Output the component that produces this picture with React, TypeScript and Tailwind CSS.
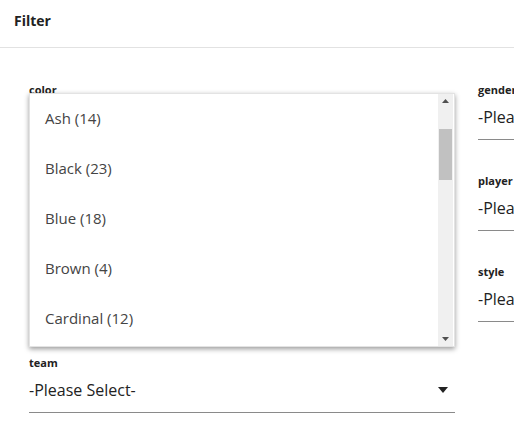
import { ReactNode } from "react";

const font = { fontFamily: '"Open Sans", "Noto Sans", sans-serif' };

function Caret() {
  return (
    <svg width="10" height="6" viewBox="0 0 10 6" className="shrink-0">
      <path d="M0 0h10L5 6z" fill="#222" />
    </svg>
  );
}

function Field({ label, children }: { label: string; children?: ReactNode }) {
  return (
    <div className="h-[91px] flex flex-col">
      <div className="text-[11px] font-bold text-[#222] leading-[14px]">{label}</div>
      <div className="mt-[9px] pb-[11px] flex items-center justify-between border-b border-[#8a8a8a] text-[16px] leading-[22px] text-[#222]">
        <span>-Please Select-</span>
        <span className="mr-[7px]">
          <Caret />
        </span>
      </div>
      {children}
    </div>
  );
}

const colors = ["Ash (14)", "Black (23)", "Blue (18)", "Brown (4)", "Cardinal (12)"];

function ColorList() {
  return (
    <div className="absolute left-0 top-[10px] w-[426px] h-[254px] bg-white border border-[#e3e3e3] shadow-[0_2px_5px_rgba(0,0,0,0.4)] flex">
      <div className="flex-1 flex flex-col -mt-[1px]">
        {colors.map((c) => (
          <div key={c} className="h-[50px] flex items-center pl-[15px] text-[15px] text-[#444]">
            {c}
          </div>
        ))}
      </div>
      <div className="w-[15px] bg-[#f0f0f0] flex flex-col items-center justify-between py-[5px] mr-[1px]">
        <svg width="7" height="4" viewBox="0 0 7 4">
          <path d="M0 4L3.5 0 7 4z" fill="#505050" />
        </svg>
        <div className="absolute top-[35px] right-[2px] w-[13px] h-[51px] bg-[#c1c1c1]" />
        <svg width="7" height="4" viewBox="0 0 7 4">
          <path d="M0 0h7L3.5 4z" fill="#505050" />
        </svg>
      </div>
    </div>
  );
}

export default function App() {
  return (
    <div className="w-[514px] h-[437px] bg-white overflow-hidden" style={font}>
      <div className="h-[48px] pt-[12px] px-[14px] border-b border-[#e2e2e2]">
        <div className="text-[14px] leading-[18px] font-bold text-[#222]">Filter</div>
      </div>
      <div className="flex gap-[23px] pl-[29px] pt-[35px]">
        <div className="relative w-[426px] shrink-0">
          <Field label="color" />
          <Field label="size" />
          <Field label="brand" />
          <Field label="team" />
          <ColorList />
        </div>
        <div className="w-[426px] shrink-0">
          <Field label="gender" />
          <Field label="player" />
          <Field label="style" />
        </div>
      </div>
    </div>
  );
}
